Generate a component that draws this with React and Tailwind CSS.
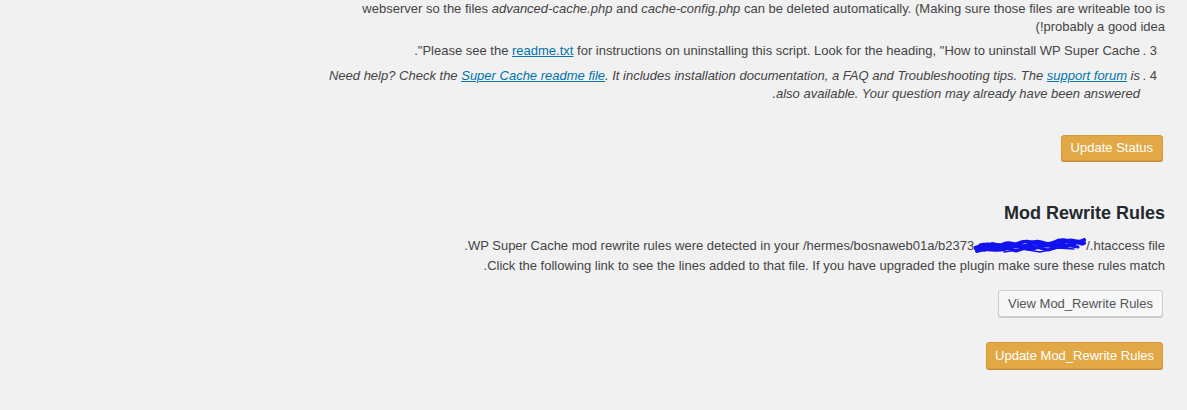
import React from 'react';

const font = { fontFamily: '"Liberation Sans", Arial, sans-serif' };

function Marker({ n }) {
  return (
    <span dir="ltr" className="w-[25px] shrink-0 pr-[8px] text-right">
      . {n}
    </span>
  );
}

function Scribble() {
  return (
    <span className="relative inline-block h-[14px] w-[112px] align-middle">
      <svg viewBox="0 0 112 16" className="absolute -top-[2px] left-0 h-[16px] w-[112px]" fill="none" stroke="#1212ee" strokeLinecap="round" strokeLinejoin="round">
        <path d="M1 10 C10 5 18 13 28 7 S46 13 56 6 S76 12 88 5 S102 8 110 2" strokeWidth="4" />
        <path d="M3 13 C14 8 22 15 34 10 S52 14 64 9 S84 13 96 7 S106 8 110 5" strokeWidth="4" />
        <path d="M6 7 C18 3 32 11 44 5 S68 10 80 4 S98 7 108 3" strokeWidth="3" />
        <path d="M10 12 L26 8 L42 13 L58 8 L74 12 L90 7 L104 9" strokeWidth="3" />
        <path d="M18 5 L34 9 L52 4 L70 8 L86 3 L100 6" strokeWidth="2" />
        <path d="M30 14 L48 11 L66 14 L84 10 L100 11" strokeWidth="1.5" />
      </svg>
    </span>
  );
}

export default function App() {
  return (
    <div className="min-h-[410px] w-full bg-[#f1f1f1] text-[13px] leading-[18px] text-[#444]" style={font}>
      <div dir="rtl" className="pr-[22px] pl-[20px]">
        <div className="whitespace-nowrap">
          <div>
            webserver so the files <em>advanced-cache.php</em> and <em>cache-config.php</em> can be deleted automatically. (Making sure those files are writeable too is
          </div>
          <div>probably a good idea!)</div>
        </div>

        <div className="mt-[6px] flex whitespace-nowrap">
          <Marker n="3" />
          <div>
            Please see the <a href="#" className="text-[#0073aa] underline">readme.txt</a> for instructions on uninstalling this script. Look for the heading, "How to uninstall WP Super Cache".
          </div>
        </div>

        <div className="mt-[7px] flex whitespace-nowrap">
          <Marker n="4" />
          <div className="italic">
            <div>
              Need help? Check the <a href="#" className="text-[#0073aa] underline">Super Cache readme file</a>. It includes installation documentation, a FAQ and Troubleshooting tips. The <a href="#" className="text-[#0073aa] underline">support forum</a> is
            </div>
            <div>also available. Your question may already have been answered.</div>
          </div>
        </div>

        <div className="mt-[32px] flex pr-[2px]">
          <button className="h-[26px] rounded-[3px] border border-[#d39b3d] bg-[#e3a846] px-[9px] text-[13px] text-white shadow-[0_1px_0_#c38a2f]">
            Update Status
          </button>
        </div>

        <h3 className="mt-[41px] text-[18px] font-bold leading-[22px] text-[#23282d]">Mod Rewrite Rules</h3>

        <div className="mt-[13px] whitespace-nowrap">
          <div>
            WP Super Cache mod rewrite rules were detected in your /hermes/bosnaweb01a/b2373<Scribble />/.htaccess file.
          </div>
          <div className="mt-[2px]">
            Click the following link to see the lines added to that file. If you have upgraded the plugin make sure these rules match.
          </div>
        </div>

        <div className="mt-[15px] flex pr-[2px]">
          <button className="h-[27px] rounded-[3px] border border-[#cccccc] bg-[#f7f7f7] px-[9px] text-[13px] text-[#555] shadow-[0_1px_0_#ccc]">
            View Mod_Rewrite Rules
          </button>
        </div>

        <div className="mt-[25px] flex pr-[2px]">
          <button className="h-[27px] rounded-[3px] border border-[#d39b3d] bg-[#e3a846] px-[8px] text-[13px] text-white shadow-[0_1px_0_#c38a2f]">
            Update Mod_Rewrite Rules
          </button>
        </div>
      </div>
    </div>
  );
}
